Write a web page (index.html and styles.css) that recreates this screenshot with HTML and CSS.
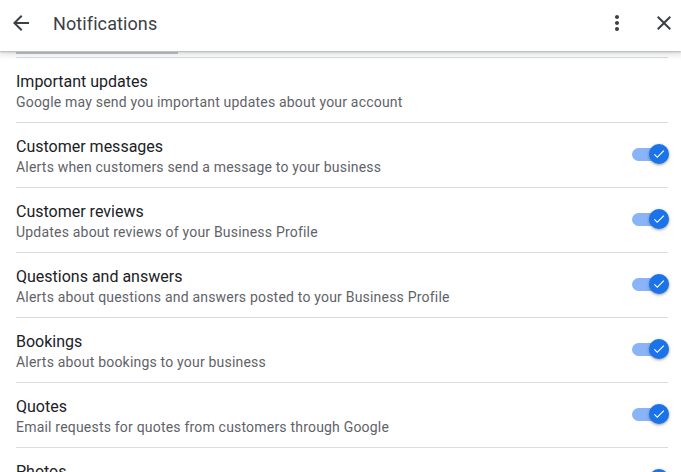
FILE: index.html
```html
<!DOCTYPE html>
<html lang="en">

<head>
    <meta charset="UTF-8">
    <meta name="viewport" content="width=device-width, initial-scale=1.0">
    <title>Notifications</title>
    <link rel="stylesheet" href="styles.css">
</head>

<body>
    <div class="panel">

        <div class="top-bar">
            <a class="icon-btn back" title="Back">
                <svg height="24px" viewBox="0 0 24 24" width="24px" fill="#3c4043">
                    <path d="M20 11H7.83l5.59-5.59L12 4l-8 8 8 8 1.41-1.41L7.83 13H20v-2z" />
                </svg>
            </a>
            <div class="title">Notifications</div>
            <a class="icon-btn" title="More">
                <svg height="24px" viewBox="0 0 24 24" width="24px" fill="#3c4043">
                    <path d="M12 8c1.1 0 2-.9 2-2s-.9-2-2-2-2 .9-2 2 .9 2 2 2zm0 2c-1.1 0-2 .9-2 2s.9 2 2 2 2-.9 2-2-.9-2-2-2zm0 6c-1.1 0-2 .9-2 2s.9 2 2 2 2-.9 2-2-.9-2-2-2z" />
                </svg>
            </a>
            <a class="icon-btn close" title="Close">
                <svg height="24px" viewBox="0 0 24 24" width="24px" fill="#3c4043">
                    <path d="M19 6.41L17.59 5 12 10.59 6.41 5 5 6.41 10.59 12 5 17.59 6.41 19 12 13.41 17.59 19 19 17.59 13.41 12z" />
                </svg>
            </a>
        </div>

        <div class="list">
            <div class="scrolled-off"><span class="tab-line"></span></div>

            <div class="row">
                <div class="text">
                    <div class="name">Important updates</div>
                    <div class="desc">Google may send you important updates about your account</div>
                </div>
            </div>

            <div class="row">
                <div class="text">
                    <div class="name">Customer messages</div>
                    <div class="desc">Alerts when customers send a message to your business</div>
                </div>
                <div class="toggle on"><span class="knob"><svg viewBox="0 0 24 24" width="14px" height="14px" fill="#fff"><path d="M9 16.17L4.83 12l-1.42 1.41L9 19 21 7l-1.41-1.41z" /></svg></span></div>
            </div>

            <div class="row">
                <div class="text">
                    <div class="name">Customer reviews</div>
                    <div class="desc">Updates about reviews of your Business Profile</div>
                </div>
                <div class="toggle on"><span class="knob"><svg viewBox="0 0 24 24" width="14px" height="14px" fill="#fff"><path d="M9 16.17L4.83 12l-1.42 1.41L9 19 21 7l-1.41-1.41z" /></svg></span></div>
            </div>

            <div class="row">
                <div class="text">
                    <div class="name">Questions and answers</div>
                    <div class="desc">Alerts about questions and answers posted to your Business Profile</div>
                </div>
                <div class="toggle on"><span class="knob"><svg viewBox="0 0 24 24" width="14px" height="14px" fill="#fff"><path d="M9 16.17L4.83 12l-1.42 1.41L9 19 21 7l-1.41-1.41z" /></svg></span></div>
            </div>

            <div class="row">
                <div class="text">
                    <div class="name">Bookings</div>
                    <div class="desc">Alerts about bookings to your business</div>
                </div>
                <div class="toggle on"><span class="knob"><svg viewBox="0 0 24 24" width="14px" height="14px" fill="#fff"><path d="M9 16.17L4.83 12l-1.42 1.41L9 19 21 7l-1.41-1.41z" /></svg></span></div>
            </div>

            <div class="row">
                <div class="text">
                    <div class="name">Quotes</div>
                    <div class="desc">Email requests for quotes from customers through Google</div>
                </div>
                <div class="toggle on"><span class="knob"><svg viewBox="0 0 24 24" width="14px" height="14px" fill="#fff"><path d="M9 16.17L4.83 12l-1.42 1.41L9 19 21 7l-1.41-1.41z" /></svg></span></div>
            </div>

            <div class="row">
                <div class="text">
                    <div class="name">Photos</div>
                    <div class="desc">Updates about photos on your Business Profile</div>
                </div>
                <div class="toggle on"><span class="knob"><svg viewBox="0 0 24 24" width="14px" height="14px" fill="#fff"><path d="M9 16.17L4.83 12l-1.42 1.41L9 19 21 7l-1.41-1.41z" /></svg></span></div>
            </div>
        </div>

    </div>
</body>

</html>
```

FILE: styles.css
```css
* {
    box-sizing: border-box;
    font-family: "Roboto", "Arial", sans-serif;
}

html,
body {
    margin: 0;
    height: 100vh;
    overflow: hidden;
    background-color: #ffffff;
}

.top-bar {
    position: relative;
    z-index: 2;
    display: flex;
    align-items: center;
    height: 51px;
    padding: 0 5px 5px 9px;
    background-color: #ffffff;
    box-shadow: 0 1px 2px rgba(60, 64, 67, 0.3), 0 2px 6px 2px rgba(60, 64, 67, 0.15);
}

.icon-btn {
    display: flex;
    width: 24px;
    height: 24px;
    cursor: pointer;
}

.top-bar .title {
    flex: 1;
    margin-left: 20px;
    font-size: 18px;
    color: #3c4043;
    letter-spacing: 0.1px;
}

.close {
    margin-left: 23px;
}

.list {
    padding: 0 13px 0 16px;
}

.scrolled-off {
    height: 6px;
    border-bottom: 1px solid #dadce0;
}

.tab-line {
    display: block;
    width: 162px;
    height: 2px;
    margin-top: 1px;
    background-color: #c4c6c9;
}

.row {
    display: flex;
    align-items: center;
    padding: 14px 0 10px;
    border-bottom: 1px solid #dadce0;
}

.text {
    flex: 1;
}

.name {
    font-size: 16px;
    line-height: 20px;
    color: #202124;
}

.desc {
    font-size: 14px;
    line-height: 20px;
    color: #5f6368;
    letter-spacing: 0.2px;
}

.toggle {
    position: relative;
    width: 36px;
    height: 13px;
    margin-top: -5px;
    border-radius: 7px;
    background-color: #8ab4f8;
}

.toggle .knob {
    position: absolute;
    top: -4px;
    right: -1px;
    display: flex;
    align-items: center;
    justify-content: center;
    width: 20px;
    height: 20px;
    border-radius: 50%;
    background-color: #1a73e8;
    box-shadow: 0 1px 2px rgba(60, 64, 67, 0.35), 0 1px 3px 1px rgba(60, 64, 67, 0.15);
}
```
